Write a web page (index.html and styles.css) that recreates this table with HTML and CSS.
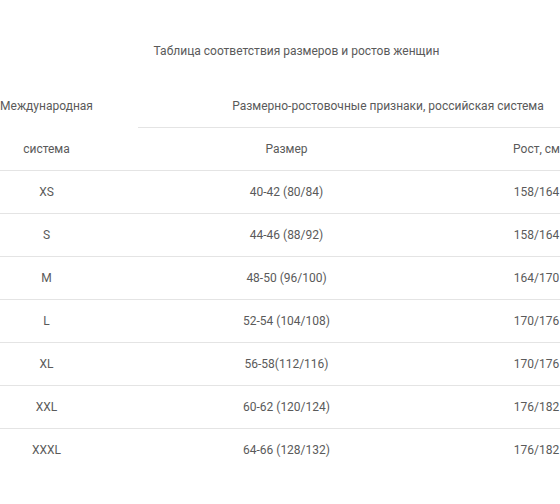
FILE: index.html
```html
<!DOCTYPE html>
<html lang="ru">
<head>
<meta charset="utf-8">
<link rel="stylesheet" href="styles.css">
</head>
<body>
<div class="wrap">
  <h1 class="title">Таблица соответствия размеров и ростов женщин</h1>
  <table class="sizes">
    <colgroup>
      <col class="c1"><col class="c2"><col class="c3">
    </colgroup>
    <thead>
      <tr class="head-top">
        <th>Международная</th>
        <th colspan="2" class="group">Размерно-ростовочные признаки, российская система</th>
      </tr>
      <tr class="head-sub">
        <th>система</th>
        <th>Размер</th>
        <th>Рост, см</th>
      </tr>
    </thead>
    <tbody>
      <tr><td>XS</td><td>40-42 (80/84)</td><td>158/164</td></tr>
      <tr><td>S</td><td>44-46 (88/92)</td><td>158/164</td></tr>
      <tr><td>M</td><td>48-50 (96/100)</td><td>164/170</td></tr>
      <tr><td>L</td><td>52-54 (104/108)</td><td>170/176</td></tr>
      <tr><td>XL</td><td>56-58(112/116)</td><td>170/176</td></tr>
      <tr><td>XXL</td><td>60-62 (120/124)</td><td>176/182</td></tr>
      <tr><td>XXXL</td><td>64-66 (128/132)</td><td>176/182</td></tr>
    </tbody>
  </table>
</div>
</body>
</html>
```

FILE: styles.css
```css
html, body {
  margin: 0;
  padding: 0;
  background: #ffffff;
  overflow: hidden;
}

body {
  font-family: Roboto, "Liberation Sans", Arial, sans-serif;
  font-size: 12px;
  color: #5a5a5a;
}

.wrap {
  width: 683px;
  margin-left: -45px;
}

.title {
  margin: 41px 0 23px;
  font-size: 12px;
  font-weight: 400;
  line-height: 20px;
  text-align: center;
  color: #5a5a5a;
}

.sizes {
  width: 683px;
  border-collapse: collapse;
  table-layout: fixed;
}

.c1 { width: 183px; }
.c2 { width: 297px; }
.c3 { width: 203px; }

.sizes th,
.sizes td {
  height: 42px;
  padding: 0;
  text-align: center;
  vertical-align: middle;
  font-weight: 400;
}

.sizes .head-top th {
  height: 43px;
}

.sizes th.group {
  border-bottom: 1px solid #e4e4e4;
}

.sizes tbody td {
  border-top: 1px solid #e4e4e4;
}
```
